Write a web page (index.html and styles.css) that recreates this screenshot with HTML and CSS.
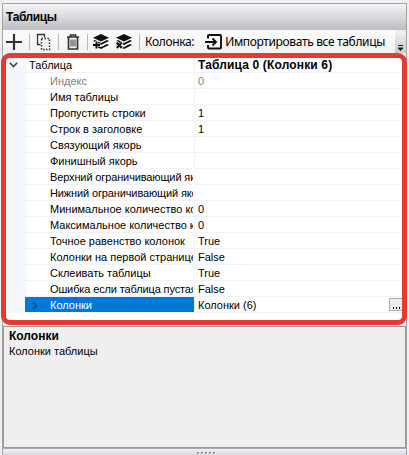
FILE: index.html
```html
<!DOCTYPE html>
<html lang="ru">
<head>
<meta charset="utf-8">
<title>Таблицы</title>
<link rel="stylesheet" href="styles.css">
</head>
<body>
<div class="panel">
  <header class="title">Таблицы</header>
  <div class="toolbar">
    <svg class="icon add" width="18" height="18" viewBox="0 0 18 18"><path d="M9 1v16M1 9h16" stroke="#333" stroke-width="2.200"/></svg>
    <i class="sep"></i>
    <svg class="icon copy" width="16" height="18" viewBox="0 0 16 18" fill="none" stroke="#333"><path d="M4.500 11.500h-3v-10h7v3" stroke-width="1.300"/><path d="M5.500 5.500h8v11h-8z" stroke-width="1.500" stroke-dasharray="1.500 1.500"/></svg>
    <i class="sep"></i>
    <svg class="icon trash" width="14" height="18" viewBox="0 0 14 18" fill="none" stroke="#333"><path d="M1 4h12M4.500 3.500V2h5v1.500M2.500 4v12h9V4" stroke-width="1.700"/><path d="M5 6.500v7M7 6.500v7M9 6.500v7"/></svg>
    <i class="sep"></i>
    <svg class="icon layers" width="18" height="18" viewBox="0 0 18 18"><path d="M9 1l8 3.700-8 3.800-8-3.800zM1 8l2-1 6 3 6-3 2 1-8 4zM1 12l2-1 6 3 6-3 2 1-8 4z" fill="#111"/><path d="M4.500 8v8M.5 12h8" stroke="#f8f8f8" stroke-width="3"/><path d="M4.500 8.500v7M1 12h7" stroke="#111" stroke-width="2"/></svg>
    <svg class="icon layers second" width="18" height="18" viewBox="0 0 18 18"><path d="M9 1l8 3.700-8 3.800-8-3.800zM1 8l2-1 6 3 6-3 2 1-8 4zM1 12l2-1 6 3 6-3 2 1-8 4z" fill="#111"/><path d="M1.500 9l6 6.500m0-6.500l-6 6.500" stroke="#f8f8f8" stroke-width="3"/><path d="M1.800 9.500l5 5.500m0-5.500l-5 5.500" stroke="#111" stroke-width="2"/></svg>
    <i class="sep"></i>
    <span class="label">Колонка:</span>
    <svg class="icon import" width="17" height="16" viewBox="0 0 17 16" fill="none" stroke="#111" stroke-width="1.900"><path d="M3 4.500V2q0-1 1-1h11q1 0 1 1v11.500q0 1-1 1H4q-1 0-1-1V11M0 8h10M7.500 4.500L11 8l-3.500 3.500"/></svg>
    <span class="label action">Импортировать все таблицы</span>
    <div class="overflow"><svg width="7" height="6" viewBox="0 0 7 6"><path d="M1 .5h5M1 3h5L3.500 5.500z" stroke="#222" stroke-width="1" fill="#222"/></svg></div>
  </div>
  <div class="grid">
    <div class="row root"><svg class="chevron" width="9" height="6" viewBox="0 0 9 6"><path d="M.8.8l3.700 3.700L8.200.8" fill="none" stroke="#404040" stroke-width="1.600"/></svg><span class="name">Таблица</span><span class="value">Таблица 0 (Колонки 6)</span></div>
    <div class="row muted"><span class="name">Индекс</span><span class="value">0</span></div>
    <div class="row"><span class="name">Имя таблицы</span><span class="value"></span></div>
    <div class="row"><span class="name">Пропустить строки</span><span class="value">1</span></div>
    <div class="row"><span class="name">Строк в заголовке</span><span class="value">1</span></div>
    <div class="row"><span class="name">Связующий якорь</span><span class="value"></span></div>
    <div class="row"><span class="name">Финишный якорь</span><span class="value"></span></div>
    <div class="row"><span class="name tight">Верхний ограничивающий якорь</span><span class="value"></span></div>
    <div class="row"><span class="name tight">Нижний ограничивающий якорь</span><span class="value"></span></div>
    <div class="row"><span class="name">Минимальное количество колонок</span><span class="value">0</span></div>
    <div class="row"><span class="name">Максимальное количество колонок</span><span class="value">0</span></div>
    <div class="row"><span class="name">Точное равенство колонок</span><span class="value">True</span></div>
    <div class="row"><span class="name">Колонки на первой странице</span><span class="value">False</span></div>
    <div class="row"><span class="name">Склеивать таблицы</span><span class="value">True</span></div>
    <div class="row"><span class="name tight">Ошибка если таблица пустая</span><span class="value">False</span></div>
    <div class="row selected"><svg class="chevron" width="6" height="9" viewBox="0 0 6 9"><path d="M.8.8l3.700 3.700L.8 8.200" fill="none" stroke="#0a4f86" stroke-width="1.700"/></svg><span class="name">Колонки</span><span class="value">Колонки (6)</span><span class="more"><i></i><i></i><i></i></span></div>
  </div>
  <section class="help"><b>Колонки</b><p>Колонки таблицы</p></section>
  <footer class="splitter"><i></i><i></i><i></i><i></i><i></i></footer>
</div>
</body>
</html>
```
FILE: styles.css
```css
* { box-sizing: border-box; }
body { margin: 0; height: 455px; overflow: hidden; background: #f0f0f0; color: #000; font: 11px/16px "Liberation Sans", Arial, sans-serif; }
.panel { margin: 3px 2px 0; height: 452px; border: 1px solid #a0a2ab; border-bottom: 0; background: #f0f0f0; display: flex; flex-direction: column; }
.title { height: 26px; flex: none; padding: 1px 0 0 3px; background: linear-gradient(#f4f5f6, #bbbdc3); font-weight: bold; font-size: 12px; line-height: 25px; letter-spacing: -.4px; }
.toolbar { height: 23px; flex: none; display: flex; align-items: center; background: linear-gradient(#fcfcfc, #f2f2f2); padding-left: 2px; position: relative; }
.icon { flex: none; }
.sep { flex: none; width: 1px; height: 16px; background: #bbb; }
.add { margin-right: 6px; }
.copy { margin: 0 6px 0 6px; }
.trash { margin: 0 7px; }
.layers { margin-left: 4px; }
.second { margin: 0 6px 0 5px; }
.label { font: 12px/20px "Noto Sans", sans-serif; letter-spacing: -.35px; margin-left: 5px; white-space: nowrap; }
.import { margin: 0 0 0 11px; }
.label.action { margin-left: 3px; }
.overflow { position: absolute; right: 0; top: 0; width: 11px; height: 23px; padding: 10px 0 0 2px; background: linear-gradient(#f2f2f2, #c8c8c8); }
.overflow svg { display: block; margin-top: 5px; }
.grid { flex: none; height: 272px; margin: 0 -1px 0 -2px; position: relative; border: 5px solid #e53a31; border-radius: 9px; background: linear-gradient(90deg, #f3f6fc 20px, #fff 20px) no-repeat 0 0 / 100% 255px, #fff; background-clip: padding-box; overflow: hidden; }
.row { height: 16px; margin-left: 19px; display: flex; position: relative; white-space: nowrap; top: -1px; }
.name { width: 169px; flex: none; padding-left: 25px; overflow: hidden; border-bottom: 1px solid #f0f2f8; border-right: 1px solid #fff; }
.tight { letter-spacing: -.13px; }
.value { flex: 1; border-left: 1px solid #f0f2f8; border-bottom: 1px solid #f0f2f8; padding-left: 3px; }
.root { margin-left: 0; }
.root .name { width: 188px; padding-left: 23px; }
.root .value { font-weight: bold; font-size: 12px; letter-spacing: .15px; }
.muted { color: #808080; }
.chevron { position: absolute; left: 3px; top: 5px; }
.selected .name { background: #0078d7; color: #fff; border-right: 0; }
.selected .chevron { left: 7px; top: 4px; }
.more { position: absolute; right: 0; top: 1px; width: 13px; height: 13px; border: 1px solid #aaa; border-right: 0; background: #eee; display: flex; gap: 2px; padding: 8px 0 0 3px; }
.more i { width: 1px; height: 2px; background: #000; }
.help { flex: 1; margin-top: 1px; border: 1px solid #999; background: #efefef; padding: 1px 5px; }
.help b { display: block; font-size: 12px; }
.help p { margin: -1px 0 0; }
.splitter { height: 7px; flex: none; display: flex; justify-content: center; gap: 2px; padding: 3px 0 0 3px; border-top: 1px solid #a9a9b8; background: linear-gradient(#f4f4f6, #d5d7dc); }
.splitter i { width: 2px; height: 2px; border: solid #888; border-width: 1px 0 0 1px; }
```
